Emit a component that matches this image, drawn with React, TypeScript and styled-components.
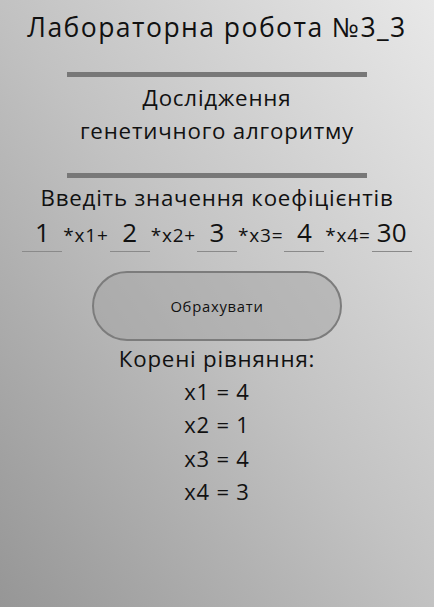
import React from "react";
import styled, { createGlobalStyle } from "styled-components";

const Global = createGlobalStyle`
  html, body { margin: 0; padding: 0; }
  body { font-family: "Open Sans", "Noto Sans", sans-serif; color: #111; }
`;

const Page = styled.div`
  min-height: 607px;
  background: linear-gradient(to top right, #969696 0%, #c2c2c2 50%, #e8e8e8 100%);
  display: flex;
  flex-direction: column;
  align-items: center;
  text-align: center;
  letter-spacing: 0.05em;
`;

const Title = styled.h1`
  margin: 10px 0 0;
  font-size: 26.5px;
  font-weight: 400;
  line-height: 34px;
  letter-spacing: 0.055em;
`;

const Bar = styled.div<{ $top: number }>`
  width: 300px;
  height: 5px;
  background: #787878;
  margin-top: ${(p) => p.$top}px;
`;

const Subtitle = styled.h2`
  margin: 4px 0 0;
  font-size: 22.3px;
  font-weight: 400;
  line-height: 33px;
`;

const Prompt = styled.div`
  margin-top: 5px;
  font-size: 22.3px;
  line-height: 30px;
`;

const EqRow = styled.div`
  display: flex;
  align-items: baseline;
  margin-top: 4px;
`;

const Coef = styled.div`
  width: 40px;
  height: 30px;
  padding-bottom: 4px;
  border-bottom: 1px solid #8a8a8a;
  font-size: 26px;
  line-height: 30px;
  letter-spacing: 0;
  text-align: center;
`;

const Op = styled.span`
  font-size: 19px;
  line-height: 30px;
  padding: 0 1px;
  white-space: nowrap;
`;

const Button = styled.button`
  margin-top: 19px;
  width: 250px;
  height: 70px;
  border: 2px solid #7c7c7c;
  border-radius: 35px;
  background: rgba(160, 160, 160, 0.45);
  font-family: inherit;
  font-size: 14.8px;
  letter-spacing: 0.05em;
  color: #111;
`;

const RootsTitle = styled.div`
  margin-top: 1px;
  font-size: 22.3px;
  line-height: 33px;
`;

const Root = styled.div`
  font-size: 22px;
  line-height: 33.3px;
`;

const coefs = ["1", "2", "3", "4"];
const ops = ["*x1+", "*x2+", "*x3=", "*x4="];
const roots = ["x1 = 4", "x2 = 1", "x3 = 4", "x4 = 3"];

export default function App() {
  return (
    <Page>
      <Global />
      <Title>Лабораторна робота №3_3</Title>
      <Bar $top={28} />
      <Subtitle>
        Дослідження
        <br />
        генетичного алгоритму
      </Subtitle>
      <Bar $top={26} />
      <Prompt>Введіть значення коефіцієнтів</Prompt>
      <EqRow>
        {coefs.map((c, i) => (
          <React.Fragment key={i}>
            <Coef>{c}</Coef>
            <Op>{ops[i]}</Op>
          </React.Fragment>
        ))}
        <Coef>30</Coef>
      </EqRow>
      <Button>Обрахувати</Button>
      <RootsTitle>Корені рівняння:</RootsTitle>
      {roots.map((r) => (
        <Root key={r}>{r}</Root>
      ))}
    </Page>
  );
}
